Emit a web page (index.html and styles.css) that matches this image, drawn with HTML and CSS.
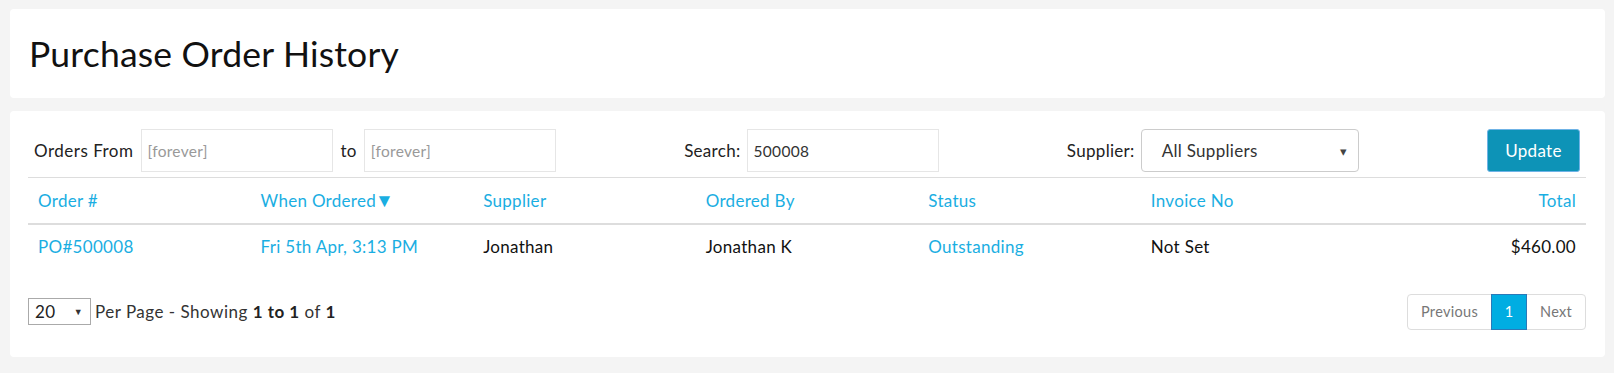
FILE: index.html
```html
<!DOCTYPE html>
<html>
<head>
<meta charset="utf-8">
<title>Purchase Order History</title>
<link rel="stylesheet" href="styles.css">
</head>
<body>
<div class="card title-card">
  <h1 class="title">Purchase Order History</h1>
</div>
<div class="card main-card">
  <div class="filters">
    <div class="group">
      <span class="label first">Orders From</span>
      <input class="field" type="text" placeholder="[forever]">
      <span class="label to">to</span>
      <input class="field" type="text" placeholder="[forever]">
    </div>
    <div class="group">
      <span class="label">Search:</span>
      <input class="field" type="text" value="500008">
    </div>
    <div class="group">
      <span class="label">Supplier:</span>
      <div class="select">
        <span>All Suppliers</span>
        <span class="caret">&#9662;</span>
      </div>
    </div>
    <button class="btn-update">Update</button>
  </div>
  <table class="orders">
    <thead>
      <tr>
        <th>Order #</th>
        <th>When Ordered<span class="sort">&#9660;</span></th>
        <th>Supplier</th>
        <th>Ordered By</th>
        <th>Status</th>
        <th>Invoice No</th>
        <th class="right">Total</th>
      </tr>
    </thead>
    <tbody>
      <tr>
        <td class="link">PO#500008</td>
        <td class="link">Fri 5th Apr, 3:13 PM</td>
        <td>Jonathan</td>
        <td>Jonathan K</td>
        <td class="link">Outstanding</td>
        <td>Not Set</td>
        <td class="right">$460.00</td>
      </tr>
    </tbody>
  </table>
  <div class="footer">
    <div class="perpage">
      <div class="small-select"><span>20</span><span class="caret small">&#9660;</span></div>
      <span class="showing">Per Page - Showing <b>1 to 1</b> of <b>1</b></span>
    </div>
    <div class="pager">
      <span class="page">Previous</span>
      <span class="page active">1</span>
      <span class="page">Next</span>
    </div>
  </div>
</div>
</body>
</html>
```
FILE: styles.css
```css
* { box-sizing: border-box; }
html, body { margin: 0; }
body {
  background: #f4f4f4;
  padding: 9px 9px 16px 10px;
  font-family: "Lato", "Noto Sans", sans-serif;
  color: #111;
  font-size: 17px;
  letter-spacing: 0.3px;
}
.card {
  background: #fff;
  border-radius: 4px;
}
.title-card {
  height: 89px;
  display: flex;
  align-items: center;
  padding-left: 19px;
}
.title {
  margin: 0;
  font-weight: 400;
  font-size: 35.5px;
  color: #111;
  letter-spacing: 0.2px;
}
.main-card {
  margin-top: 13px;
  height: 246px;
  padding: 18px 19px 0 18px;
}
.filters {
  display: flex;
  justify-content: space-between;
  align-items: center;
  height: 43px;
  padding: 0 6px 0 6px;
}
.group {
  display: flex;
  align-items: center;
  height: 43px;
}
.label {
  color: #222;
  font-size: 17px;
  margin-right: 6px;
}
.label.first { letter-spacing: 0.5px; margin-right: 7px; }
.label.to { margin-left: 8px; margin-right: 7px; }
.field {
  width: 192px;
  height: 43px;
  border: 1px solid #e6e6e6;
  border-radius: 0;
  padding: 0 6px;
  font-family: "Lato", "Noto Sans", sans-serif;
  font-size: 15.5px;
  letter-spacing: 0.3px;
  color: #333;
  outline: none;
}
.field::placeholder { color: #999; }
.select {
  width: 218px;
  height: 43px;
  border: 1px solid #ccc;
  border-radius: 4px;
  display: flex;
  align-items: center;
  justify-content: space-between;
  padding: 0 10px 0 20px;
  font-size: 17px;
  color: #333;
}
.caret { font-size: 13px; color: #444; }
.btn-update {
  width: 93px;
  height: 43px;
  background: #0d93b7;
  border: 1px solid #6fb3e6;
  border-radius: 3px;
  color: #fff;
  font-family: "Lato", "Noto Sans", sans-serif;
  font-size: 17px;
  letter-spacing: 0.3px;
}
.orders {
  width: 100%;
  margin-top: 5px;
  border-collapse: collapse;
  table-layout: fixed;
  border-top: 1px solid #ddd;
}
.orders th {
  text-align: left;
  font-weight: 400;
  color: #1aaee2;
  height: 46px;
  padding: 0 10px;
  border-bottom: 2px solid #ddd;
  font-size: 17px;
}
.orders td {
  height: 45px;
  padding: 0 10px;
  font-size: 17px;
  color: #111;
}
.orders td.link { color: #1aaee2; }
.orders .right { text-align: right; }
.sort { font-size: 19px; margin-left: -1px; letter-spacing: 0; line-height: 1; }
.footer {
  display: flex;
  justify-content: space-between;
  align-items: center;
  margin-top: 25px;
}
.perpage { display: flex; align-items: center; }
.small-select {
  width: 63px;
  height: 27px;
  border: 1px solid #aaa;
  display: flex;
  align-items: center;
  justify-content: space-between;
  padding: 0 7px 0 6px;
  font-size: 17px;
  color: #222;
}
.caret.small { font-size: 9px; color: #333; }
.showing { margin-left: 4px; color: #333; font-size: 17px; letter-spacing: 0.5px; }
.showing b { color: #222; }
.pager {
  display: flex;
  height: 36px;
  border: 1px solid #ddd;
  border-radius: 4px;
}
.page {
  display: flex;
  align-items: center;
  justify-content: center;
  color: #777;
  font-size: 14.5px;
  padding: 0 11px;
}
.page:first-child { width: 83px; }
.page:last-child { width: 58px; }
.page.active {
  width: 36px;
  background: #00ade2;
  color: #fff;
  border: 1px solid #2b79b8;
  margin: -1px 0;
}
```
